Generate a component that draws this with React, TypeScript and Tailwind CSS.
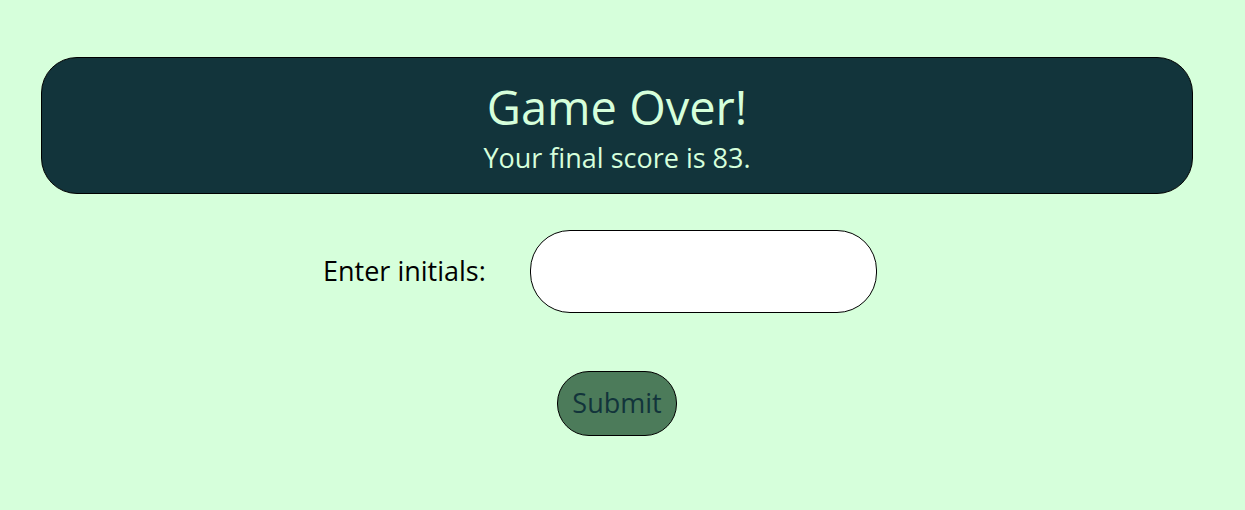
import { useState } from 'react';

export default function App() {
  const [initials, setInitials] = useState('');

  return (
    <main className="min-h-screen w-full bg-[#d6ffdb] pt-[57px] font-['Open_Sans',sans-serif]">
      <section className="ml-[41px] flex h-[137px] w-[1152px] flex-col items-center justify-center rounded-[36px] border border-black bg-[#12343b] text-[#d6ffdb]">
        <h1 className="text-[47px] leading-[64px]">Game Over!</h1>
        <p className="text-[27px] leading-[37px]">Your final score is 83.</p>
      </section>

      <form
        className="mt-[36px] flex flex-col"
        onSubmit={(event) => {
          event.preventDefault();
        }}
      >
        <div className="ml-[323px] flex items-center">
          <label htmlFor="initials" className="w-[207px] text-[27px] text-black">
            Enter initials:
          </label>
          <input
            id="initials"
            type="text"
            value={initials}
            onChange={(event) => setInitials(event.target.value)}
            className="h-[83px] w-[347px] rounded-[40px] border border-black bg-white px-6 text-[27px] focus:outline-none"
          />
        </div>

        <button
          type="submit"
          className="ml-[557px] mt-[58px] h-[65px] w-[120px] rounded-[32px] border border-black bg-[#4c7b5a] text-[27px] text-[#12343b]"
        >
          Submit
        </button>
      </form>
    </main>
  );
}
